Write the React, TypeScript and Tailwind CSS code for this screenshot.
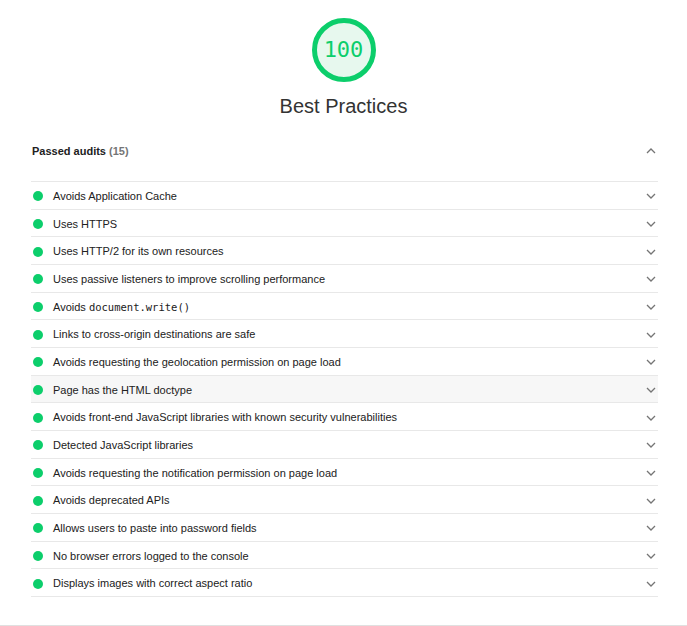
import React from 'react';

const audits: { label: React.ReactNode; hover?: boolean }[] = [
  { label: 'Avoids Application Cache' },
  { label: 'Uses HTTPS' },
  { label: 'Uses HTTP/2 for its own resources' },
  { label: 'Uses passive listeners to improve scrolling performance' },
  {
    label: (
      <>
        Avoids <code className="font-['DejaVu_Sans_Mono',monospace] text-[10.5px]">document.write()</code>
      </>
    ),
  },
  { label: 'Links to cross-origin destinations are safe' },
  { label: 'Avoids requesting the geolocation permission on page load' },
  { label: 'Page has the HTML doctype', hover: true },
  { label: 'Avoids front-end JavaScript libraries with known security vulnerabilities' },
  { label: 'Detected JavaScript libraries' },
  { label: 'Avoids requesting the notification permission on page load' },
  { label: 'Avoids deprecated APIs' },
  { label: 'Allows users to paste into password fields' },
  { label: 'No browser errors logged to the console' },
  { label: 'Displays images with correct aspect ratio' },
];

function Chevron({ up = false }: { up?: boolean }) {
  return (
    <svg width="10" height="6" viewBox="0 0 10 6" fill="none" stroke="#757575" strokeWidth="1.3">
      {up ? <polyline points="1,5 5,1 9,5" /> : <polyline points="1,1 5,5 9,1" />}
    </svg>
  );
}

export default function App() {
  return (
    <div className="h-[626px] w-full bg-white border-b border-[#e0e0e0] font-['Liberation_Sans',Arial,sans-serif] text-[#212121]">
      {/* Gauge */}
      <div className="flex flex-col items-center pt-[18px]">
        <div className="w-16 h-16 rounded-full border-[5px] border-[#0cce6b] bg-[#e7f8ee] flex items-center justify-center">
          <span className="font-['DejaVu_Sans_Mono',monospace] text-[22px] text-[#0cce6b] leading-none">100</span>
        </div>
        <h1 className="mt-[12px] text-[20px] leading-6 text-[#333]">Best Practices</h1>
      </div>

      <div className="ml-[31px] mr-[29px]">
        {/* Group header */}
        <div className="mt-[23px] h-[20px] flex items-center justify-between pl-[1px] pr-[2px]">
          <span className="text-[11px] font-bold">
            Passed audits <span className="text-[#757575]">(15)</span>
          </span>
          <Chevron up />
        </div>

        {/* Audit rows */}
        <div className="mt-[20px] border-t border-[#e8e8e8]">
          {audits.map((a, i) => (
            <div
              key={i}
              className={`h-[27.67px] pt-[2px] border-b border-[#e8e8e8] flex items-center pr-[2px] ${a.hover ? 'bg-[#f7f7f7]' : ''}`}
            >
              <span className="ml-[2px] w-[10px] h-[10px] rounded-full bg-[#0cce6b] shrink-0" />
              <span className="ml-[10px] text-[11px] flex-1">{a.label}</span>
              <Chevron />
            </div>
          ))}
        </div>
      </div>
    </div>
  );
}
